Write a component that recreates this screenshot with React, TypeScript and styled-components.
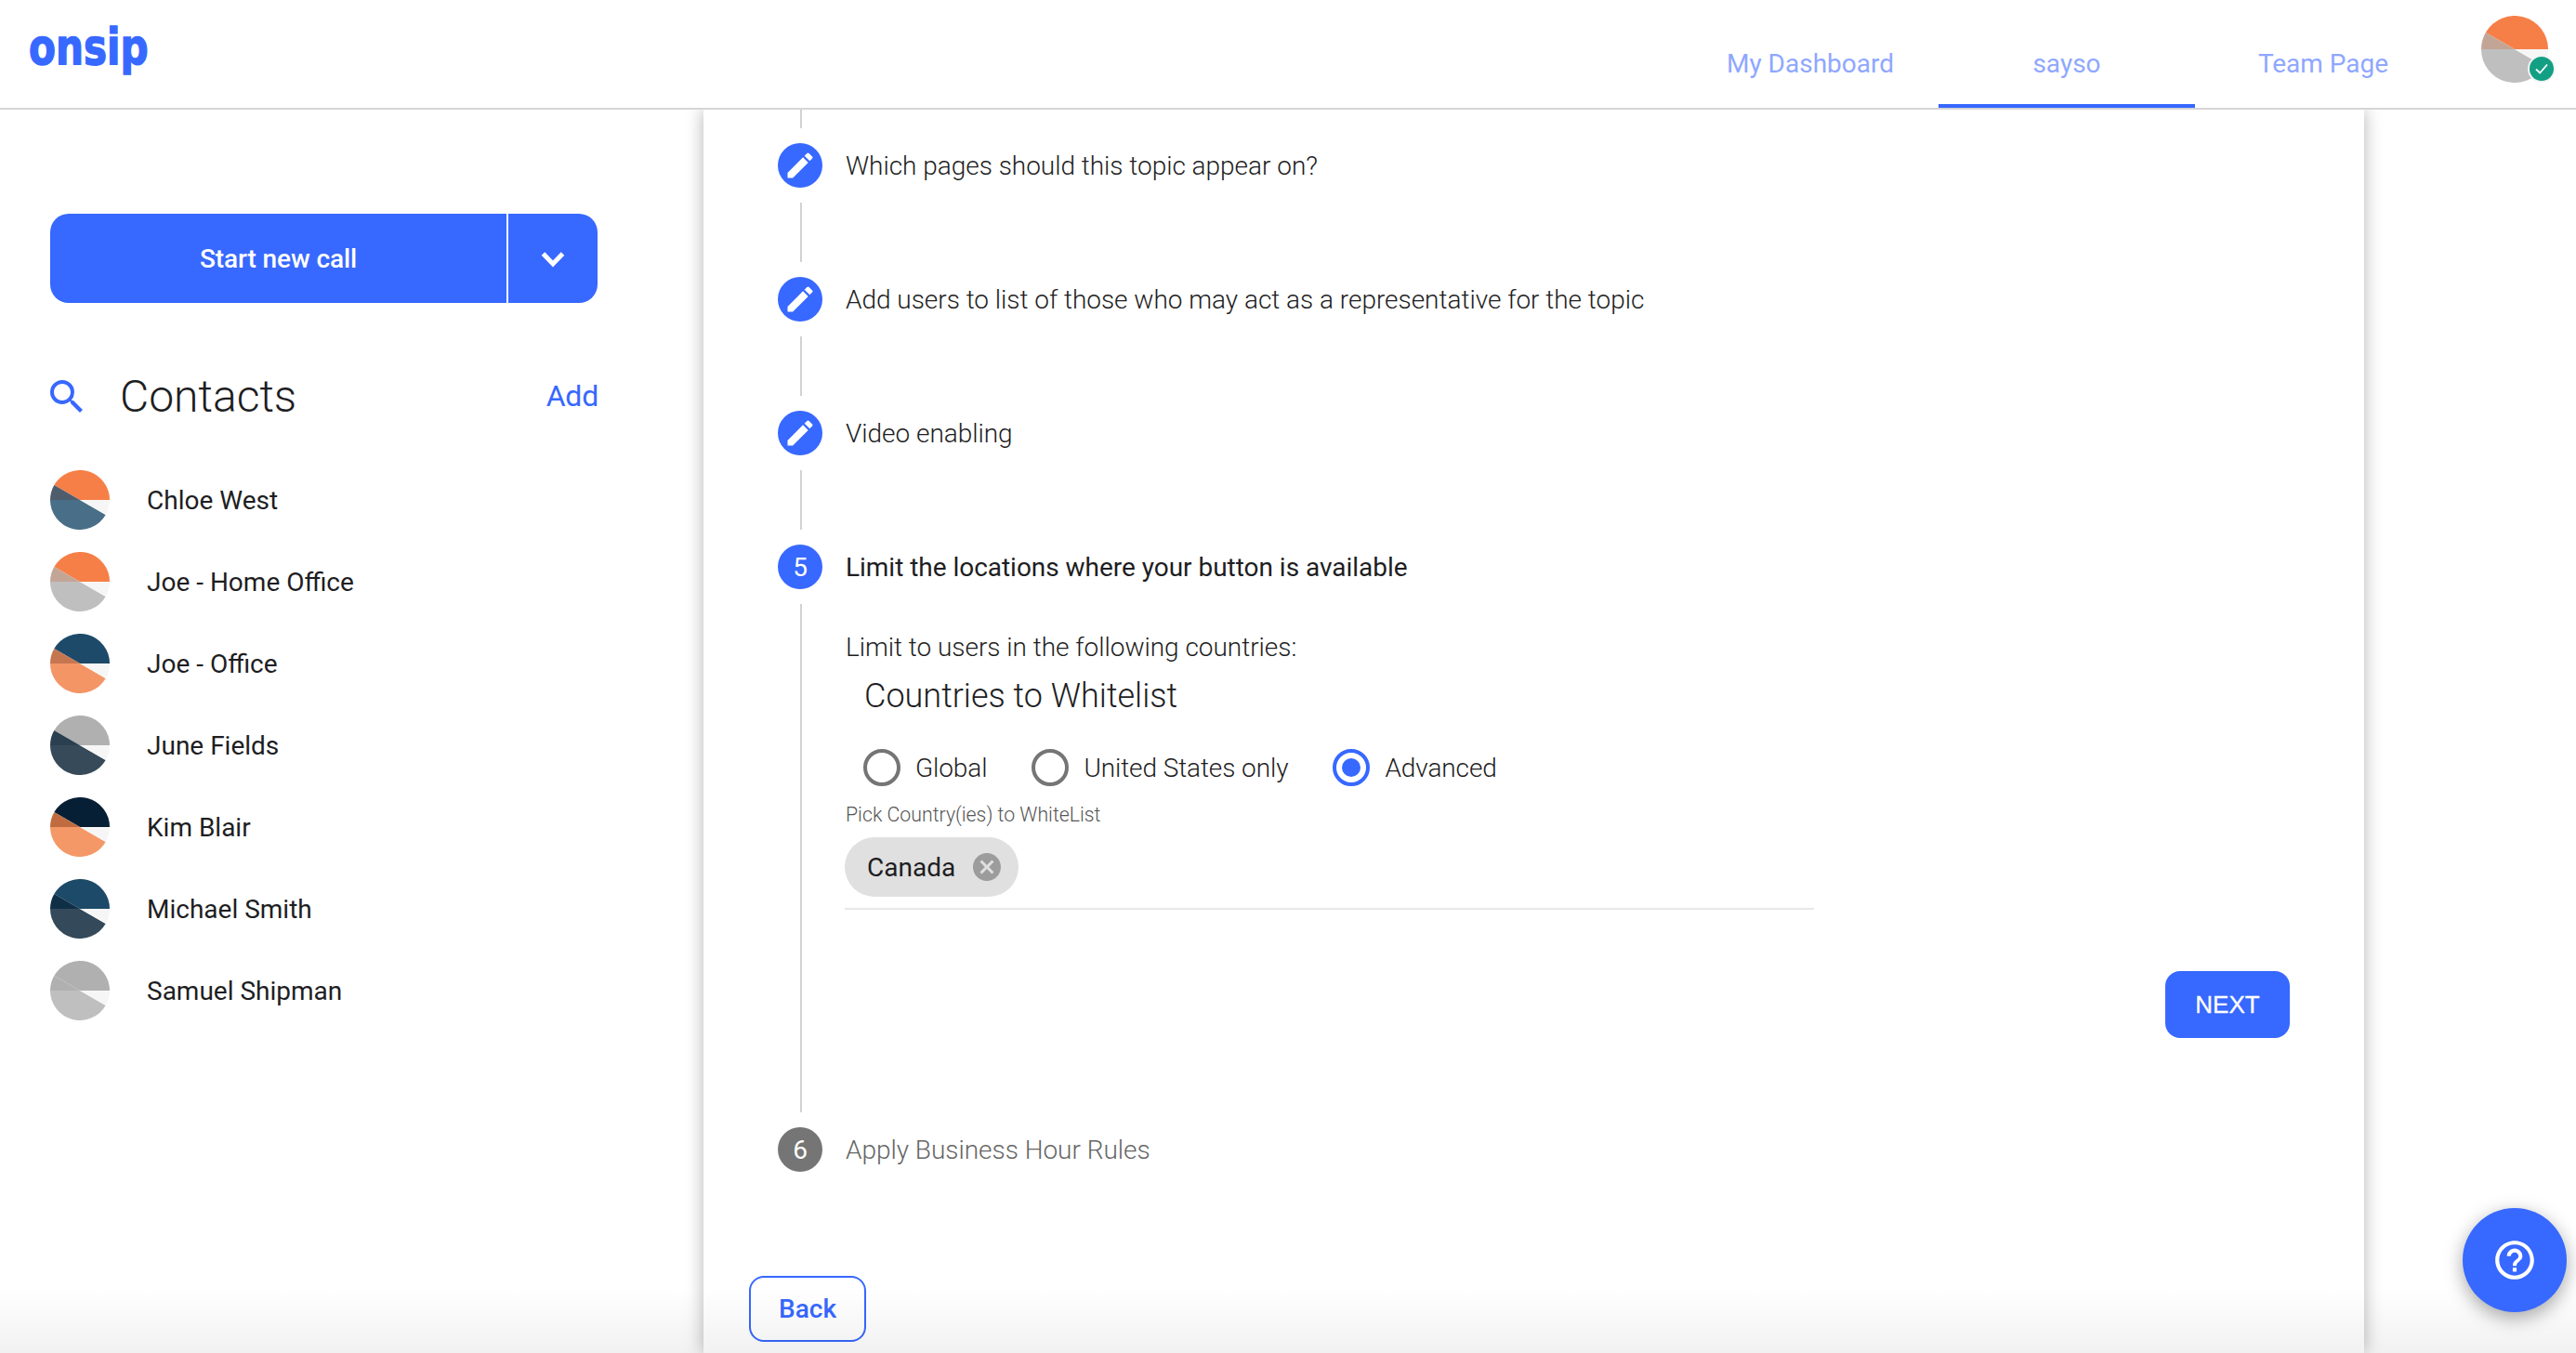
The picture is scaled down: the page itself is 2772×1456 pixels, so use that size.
import styled, { createGlobalStyle } from 'styled-components';
import { MdEdit, MdHelpOutline, MdSearch, MdCancel } from 'react-icons/md';

const BLUE = '#3768ff';
const TEXT = '#1e1e23';

const GlobalStyle = createGlobalStyle`
  html, body {
    margin: 0;
    padding: 0;
    background: #fff;
    font-family: Roboto, "Liberation Sans", sans-serif;
    color: ${TEXT};
  }
  * {
    box-sizing: border-box;
  }
`;

const Page = styled.div`
  position: relative;
  width: 2772px;
  height: 1456px;
  overflow: hidden;
  display: flex;
  flex-direction: column;
`;
const BottomFade = styled.div`
  position: absolute;
  left: 0;
  right: 0;
  bottom: 0;
  height: 70px;
  background: linear-gradient(rgba(0, 0, 0, 0), rgba(0, 0, 0, 0.055));
  pointer-events: none;
  z-index: 3;
`;

const Header = styled.header`
  position: relative;
  z-index: 2;
  flex: none;
  height: 118px;
  display: flex;
  align-items: flex-start;
  justify-content: space-between;
  background: #fff;
  border-bottom: 2px solid #d5d5d5;
`;
const Logo = styled.div`
  margin: 21px 0 0 31px;
  font-family: 'DejaVu Sans', sans-serif;
  font-weight: 700;
  font-size: 54px;
  line-height: 60px;
  color: ${BLUE};
  -webkit-text-stroke: 1.5px ${BLUE};
  transform: scaleX(0.78);
  transform-origin: left center;
`;
const HeaderRight = styled.div`
  display: flex;
  align-items: flex-start;
  padding-right: 22px;
`;
const Tabs = styled.nav`
  display: flex;
`;
const Tab = styled.a<{ $active?: boolean }>`
  width: 276px;
  height: 116px;
  padding-top: 49px;
  text-align: center;
  font-size: 28px;
  line-height: 40px;
  color: #8fa7ff;
  border-bottom: 4px solid ${({ $active }) => ($active ? BLUE : 'transparent')};
`;
const ProfileWrap = styled.div`
  position: relative;
  width: 80px;
  height: 72px;
  margin: 17px 0 0 32px;
`;
const Badge = styled.div`
  position: absolute;
  right: 0;
  bottom: 0;
  width: 30px;
  height: 30px;
  border-radius: 50%;
  border: 2px solid #f4f4f4;
  background: #139f84;
  display: flex;
  align-items: center;
  justify-content: center;
`;

const Body = styled.div`
  flex: 1;
  min-height: 0;
  display: grid;
  grid-template-columns: 757px 1787px 1fr;
`;

const Sidebar = styled.aside`
  padding: 112px 0 0 54px;
  width: 644px;
`;
const CallButton = styled.div`
  width: 589px;
  height: 96px;
  display: flex;
  border-radius: 20px;
  overflow: hidden;
  background: ${BLUE};
  color: #fff;
`;
const CallMain = styled.div`
  flex: 1;
  display: flex;
  align-items: center;
  justify-content: center;
  font-size: 28px;
  font-weight: 500;
  letter-spacing: -0.1px;
  border-right: 2px solid #fff;
`;
const CallMore = styled.div`
  width: 96px;
  padding-top: 2px;
  display: flex;
  align-items: center;
  justify-content: center;
`;
const ContactsHead = styled.div`
  display: flex;
  align-items: center;
  height: 58px;
  margin-top: 72px;
`;
const SearchIcon = styled(MdSearch)`
  flex: none;
  width: 48px;
  height: 48px;
  margin-left: -6px;
  color: ${BLUE};
`;
const ContactsTitle = styled.h2`
  flex: 1;
  margin: 0 0 0 33px;
  font-size: 48px;
  line-height: 58px;
  font-weight: 300;
`;
const AddLink = styled.a`
  margin-bottom: 2px;
  font-size: 32px;
  letter-spacing: -0.2px;
  color: ${BLUE};
`;
const ContactList = styled.ul`
  list-style: none;
  margin: 38px 0 0;
  padding: 0;
`;
const ContactRow = styled.li`
  height: 88px;
  display: flex;
  align-items: center;
  gap: 40px;
  font-size: 28px;
`;

const Panel = styled.main`
  background: #fff;
  box-shadow: 0 0 18px rgba(0, 0, 0, 0.3);
  display: flex;
  flex-direction: column;
`;
const Stepper = styled.div`
  padding: 0 80px;
`;
const Connector = styled.div<{ $short?: boolean }>`
  width: 2px;
  height: ${({ $short }) => ($short ? '20px' : '64px')};
  margin: ${({ $short }) => ($short ? '0 0 16px 24px' : '16px 0 16px 24px')};
  background: #d2d2d2;
`;
const StepRow = styled.div`
  display: flex;
  align-items: center;
  gap: 25px;
  height: 48px;
`;
const StepIcon = styled.div<{ $muted?: boolean }>`
  flex: none;
  width: 48px;
  height: 48px;
  border-radius: 50%;
  display: flex;
  align-items: center;
  justify-content: center;
  background: ${({ $muted }) => ($muted ? '#757575' : BLUE)};
  color: #fff;
  font-size: 28px;
`;
const StepLabel = styled.span<{ $active?: boolean; $muted?: boolean }>`
  font-size: 28px;
  letter-spacing: -0.03px;
  font-weight: ${({ $active }) => ($active ? 400 : 300)};
  color: ${({ $muted }) => ($muted ? '#666' : TEXT)};
`;
const StepBody = styled.div`
  margin: 16px 0 16px 24px;
  height: 547px;
  padding: 27px 0 0 47px;
  border-left: 2px solid #d2d2d2;
  display: flex;
  flex-direction: column;
`;
const Intro = styled.div`
  font-size: 28px;
  letter-spacing: -0.03px;
  font-weight: 300;
  line-height: 40px;
`;
const GroupTitle = styled.h3`
  margin: 10px 0 0 20px;
  font-size: 36px;
  line-height: 44px;
  font-weight: 300;
`;
const RadioRow = styled.div`
  display: flex;
  margin: 35px 0 0 19px;
  height: 40px;
`;
const RadioItem = styled.label`
  display: flex;
  align-items: center;
  gap: 16px;
  margin-right: 48px;
  font-size: 28px;
  letter-spacing: -0.1px;
  font-weight: 300;
`;
const RadioCircle = styled.span<{ $checked?: boolean }>`
  flex: none;
  width: 40px;
  height: 40px;
  border-radius: 50%;
  border: 4px solid ${({ $checked }) => ($checked ? BLUE : '#757575')};
  display: flex;
  align-items: center;
  justify-content: center;
  &::after {
    content: '';
    width: 20px;
    height: 20px;
    border-radius: 50%;
    background: ${({ $checked }) => ($checked ? BLUE : 'transparent')};
  }
`;
const FieldLabel = styled.div`
  margin-top: 17px;
  font-size: 21.3px;
  line-height: 28px;
  font-weight: 300;
  color: #555;
`;
const ChipField = styled.div`
  width: 1043px;
  margin: 10px 0 0 -1px;
  padding-bottom: 12px;
  border-bottom: 2px solid #e8e8e8;
`;
const Chip = styled.div`
  width: 187px;
  height: 64px;
  padding: 0 16px 0 24px;
  border-radius: 32px;
  background: #e0e0e0;
  display: flex;
  align-items: center;
  justify-content: space-between;
  font-size: 28px;
`;
const ChipClose = styled(MdCancel)`
  flex: none;
  width: 36px;
  height: 36px;
  color: #9c9c9c;
`;
const NextButton = styled.button`
  align-self: flex-end;
  width: 134px;
  height: 72px;
  margin: 66px 0 0;
  border: 0;
  border-radius: 16px;
  background: ${BLUE};
  color: #fff;
  font-family: 'Liberation Sans', Arial, sans-serif;
  font-size: 26px;
  -webkit-text-stroke: 0.3px #fff;
`;
const BackRow = styled.div`
  padding: 112px 0 0 49px;
`;
const BackButton = styled.button`
  width: 126px;
  height: 71px;
  border: 2px solid ${BLUE};
  border-radius: 16px;
  background: #fff;
  color: ${BLUE};
  font-family: Roboto, sans-serif;
  font-size: 28px;
  font-weight: 500;
`;
const HelpFab = styled.button`
  position: absolute;
  left: 2650px;
  top: 1300px;
  z-index: 4;
  width: 112px;
  height: 112px;
  padding: 0;
  border: 0;
  border-radius: 50%;
  background: ${BLUE};
  color: #fff;
  display: flex;
  align-items: center;
  justify-content: center;
  box-shadow: 0 6px 20px rgba(0, 0, 0, 0.35);
`;

type AvatarColors = { top: string; mix: string; bottom: string };

// split disc used for every person without a photo
const Avatar = ({ top, mix, bottom, size = 64 }: AvatarColors & { size?: number }) => (
  <svg width={size} height={size} viewBox="0 0 64 64" style={{ flex: 'none' }}>
    <path d="M32 32 L4.3 16 A32 32 0 0 1 64 32 Z" fill={top} />
    <path d="M32 32 L0 32 A32 32 0 0 1 4.3 16 Z" fill={mix} />
    <path d="M32 32 L59.7 48 A32 32 0 0 1 0 32 Z" fill={bottom} />
    <path d="M32 32 L64 32 A32 32 0 0 1 59.7 48 Z" fill="#f6f6f6" />
  </svg>
);

const CONTACTS: ({ name: string } & AvatarColors)[] = [
  { name: 'Chloe West', top: '#f67f47', mix: '#4f5c6b', bottom: '#486f87' },
  { name: 'Joe - Home Office', top: '#f67f47', mix: '#c3a596', bottom: '#bfbfbf' },
  { name: 'Joe - Office', top: '#1d4a68', mix: '#c5764f', bottom: '#f49566' },
  { name: 'June Fields', top: '#b0b0b0', mix: '#2a3f4f', bottom: '#374a59' },
  { name: 'Kim Blair', top: '#071f35', mix: '#c06c40', bottom: '#f59867' },
  { name: 'Michael Smith', top: '#1d4a68', mix: '#0f2f47', bottom: '#344a5a' },
  { name: 'Samuel Shipman', top: '#b0b0b0', mix: '#b0b0b0', bottom: '#bfbfbf' },
];

const DONE_STEPS = [
  'Which pages should this topic appear on?',
  'Add users to list of those who may act as a representative for the topic',
  'Video enabling',
];

export default function App() {
  return (
    <Page>
      <GlobalStyle />
      <Header>
        <Logo>onsip</Logo>
        <HeaderRight>
          <Tabs>
            <Tab>My Dashboard</Tab>
            <Tab $active>sayso</Tab>
            <Tab>Team Page</Tab>
          </Tabs>
          <ProfileWrap>
            <Avatar top="#f67f47" mix="#c3a596" bottom="#bfbfbf" size={72} />
            <Badge>
              <svg width="18" height="18" viewBox="0 0 18 18">
                <path d="M3 9.5 L7.2 13.5 L15 4.5" fill="none" stroke="#fff" strokeWidth="1.8" />
              </svg>
            </Badge>
          </ProfileWrap>
        </HeaderRight>
      </Header>
      <Body>
        <Sidebar>
          <CallButton>
            <CallMain>Start new call</CallMain>
            <CallMore>
              <svg width="26" height="18" viewBox="0 0 26 18">
                <path d="M2.5 3 L13 14 L23.5 3" fill="none" stroke="#fff" strokeWidth="5" />
              </svg>
            </CallMore>
          </CallButton>
          <ContactsHead>
            <SearchIcon />
            <ContactsTitle>Contacts</ContactsTitle>
            <AddLink>Add</AddLink>
          </ContactsHead>
          <ContactList>
            {CONTACTS.map(({ name, ...colors }) => (
              <ContactRow key={name}>
                <Avatar {...colors} />
                {name}
              </ContactRow>
            ))}
          </ContactList>
        </Sidebar>
        <Panel>
          <Stepper>
            <Connector $short />
            {DONE_STEPS.map((label) => (
              <div key={label}>
                <StepRow>
                  <StepIcon>
                    <MdEdit size={36} />
                  </StepIcon>
                  <StepLabel>{label}</StepLabel>
                </StepRow>
                <Connector />
              </div>
            ))}
            <StepRow>
              <StepIcon>5</StepIcon>
              <StepLabel $active>Limit the locations where your button is available</StepLabel>
            </StepRow>
            <StepBody>
              <Intro>Limit to users in the following countries:</Intro>
              <GroupTitle>Countries to Whitelist</GroupTitle>
              <RadioRow>
                <RadioItem>
                  <RadioCircle />
                  Global
                </RadioItem>
                <RadioItem>
                  <RadioCircle />
                  United States only
                </RadioItem>
                <RadioItem>
                  <RadioCircle $checked />
                  Advanced
                </RadioItem>
              </RadioRow>
              <FieldLabel>Pick Country(ies) to WhiteList</FieldLabel>
              <ChipField>
                <Chip>
                  Canada
                  <ChipClose />
                </Chip>
              </ChipField>
              <NextButton>NEXT</NextButton>
            </StepBody>
            <StepRow>
              <StepIcon $muted>6</StepIcon>
              <StepLabel $muted>Apply Business Hour Rules</StepLabel>
            </StepRow>
          </Stepper>
          <BackRow>
            <BackButton>Back</BackButton>
          </BackRow>
        </Panel>
      </Body>
      <BottomFade />
      <HelpFab>
        <MdHelpOutline size={50} />
      </HelpFab>
    </Page>
  );
}
